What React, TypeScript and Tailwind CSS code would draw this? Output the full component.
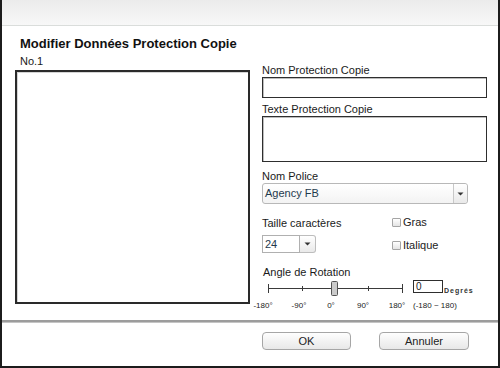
import React from "react";

function Arrow() {
  return (
    <svg width="7" height="4" viewBox="0 0 7 4">
      <path d="M0.5 0.5 L6.5 0.5 L3.5 3.5 Z" fill="#333" />
    </svg>
  );
}

function Slider() {
  const labels: [string, number][] = [
    ["-180°", 1],
    ["-90°", 37],
    ["0°", 69],
    ["90°", 101],
    ["180°", 135],
  ];
  return (
    <div className="relative w-[225px] h-[34px] mt-[0px]">
      <svg className="absolute left-0 top-0" width="150" height="20" viewBox="0 0 150 20">
        <line x1="6" y1="9.5" x2="141" y2="9.5" stroke="#3a3a3a" strokeWidth="1" />
        <line x1="6.5" y1="5" x2="6.5" y2="14" stroke="#3a3a3a" strokeWidth="1" />
        <line x1="140.5" y1="5" x2="140.5" y2="14" stroke="#3a3a3a" strokeWidth="1" />
        <line x1="40.5" y1="7" x2="40.5" y2="12" stroke="#3a3a3a" strokeWidth="1" />
        <line x1="106.5" y1="7" x2="106.5" y2="12" stroke="#3a3a3a" strokeWidth="1" />
        <rect x="69.5" y="2.5" width="6" height="14" rx="1" fill="#cbcbcb" stroke="#555" strokeWidth="1" />
      </svg>
      <div className="absolute left-[151px] top-[1px] w-[30px] h-[13px] border border-[#2e2e2e] bg-white text-[10px] leading-[11px] pl-[2px] text-[#222]">
        0
      </div>
      <div className="absolute left-[182px] top-[7px] text-[7px] leading-[9px] font-bold tracking-[1px] text-[#333]">
        Degrés
      </div>
      {labels.map(([t, x]) => (
        <div
          key={t}
          className="absolute top-[22px] w-[30px] -ml-[15px] text-center text-[8px] leading-[10px] text-[#222]"
          style={{ left: x }}
        >
          {t}
        </div>
      ))}
      <div className="absolute left-[151px] top-[22px] text-[8px] leading-[10px] text-[#222] whitespace-nowrap">
        (-180 ~ 180)
      </div>
    </div>
  );
}

function Checkbox({ label, className }: { label: string; className?: string }) {
  return (
    <div className={"flex items-center h-[13px] " + (className ?? "")}>
      <div className="w-[9px] h-[9px] border border-[#a5a5a5] rounded-[1px] bg-gradient-to-b from-white to-[#e4e4e4]" />
      <span className="ml-[2px] text-[11px] leading-[13px] text-[#222]">{label}</span>
    </div>
  );
}

export default function App() {
  return (
    <div className="w-[500px] h-[368px] bg-white border-x-2 border-b-2 border-[#1c1c1c] flex flex-col overflow-hidden font-['Liberation_Sans',Arial,sans-serif] text-[#1a1a1a]">
      <div className="h-[26px] shrink-0 bg-gradient-to-b from-[#ebebeb] to-[#f8f8f8] border-b border-[#dadddb]" />
      <div className="mt-[10px] ml-[18px] text-[13px] leading-[16px] font-bold text-[#111]">
        Modifier Données Protection Copie
      </div>
      <div className="flex mt-[3px] h-[265px] shrink-0">
        <div className="w-[248px] shrink-0">
          <div className="ml-[18px] text-[11px] leading-[13px]">No.1</div>
          <div className="mt-[2px] ml-[13px] w-[235px] h-[234px] border-2 border-[#2a2a2a] shadow-[inset_1px_1px_0_#d4d4d4] bg-white" />
        </div>
        <div className="ml-[12px] pt-[9px] w-[226px] flex flex-col">
          <div className="text-[11px] leading-[13px]">Nom Protection Copie</div>
          <div className="w-[225px] h-[21px] border border-[#2e2e2e] shadow-[inset_1px_1px_0_#bdbdbd] bg-white" />
          <div className="mt-[5px] text-[11px] leading-[13px]">Texte Protection Copie</div>
          <div className="w-[225px] h-[46px] border border-[#2e2e2e] shadow-[inset_1px_1px_0_#bdbdbd] bg-white" />
          <div className="mt-[8px] text-[11px] leading-[13px]">Nom Police</div>
          <div className="w-[206px] h-[21px] flex border border-[#b8b8b8] rounded-[3px] bg-gradient-to-b from-white to-[#f3f3f3]">
            <div className="flex-1 pl-[2px] text-[11px] leading-[19px] text-[#1f3a4d]">Agency FB</div>
            <div className="w-[14px] h-full flex items-center justify-center border-l border-[#c8c8c8] rounded-r-[3px] bg-gradient-to-b from-white to-[#e9e9e9]">
              <Arrow />
            </div>
          </div>
          <div className="mt-[13px] flex">
            <div className="w-[130px]">
              <div className="text-[11px] leading-[13px]">Taille caractères</div>
              <div className="mt-[5px] w-[54px] h-[18px] flex">
                <div className="w-[38px] h-full border border-[#b0b0b0] bg-white pl-[2px] text-[11px] leading-[16px] text-[#1f3a4d]">24</div>
                <div className="w-[16px] h-full flex items-center justify-center border border-[#bdbdbd] border-l-0 rounded-r-[3px] bg-gradient-to-b from-white to-[#e9e9e9]">
                  <Arrow />
                </div>
              </div>
            </div>
            <div className="-mt-[1px]">
              <Checkbox label="Gras" />
              <Checkbox label="Italique" className="mt-[10px]" />
            </div>
          </div>
          <div className="mt-[13px] text-[11px] leading-[13px] ml-[1px]">Angle de Rotation</div>
          <Slider />
        </div>
      </div>
      <div className="h-[3px] shrink-0 bg-[#c4c4c4] border-t-2 border-[#9c9c9c]" />
      <div className="flex mt-[9px] ml-[260px]">
        <button className="w-[89px] h-[18px] border border-[#a6a6a6] rounded-[4px] bg-gradient-to-b from-[#fefefe] to-[#e8e8e8] text-[11px] leading-[16px] text-[#222]">
          OK
        </button>
        <button className="ml-[28px] w-[90px] h-[18px] border border-[#a6a6a6] rounded-[4px] bg-gradient-to-b from-[#fefefe] to-[#e8e8e8] text-[11px] leading-[16px] text-[#222]">
          Annuler
        </button>
      </div>
    </div>
  );
}
